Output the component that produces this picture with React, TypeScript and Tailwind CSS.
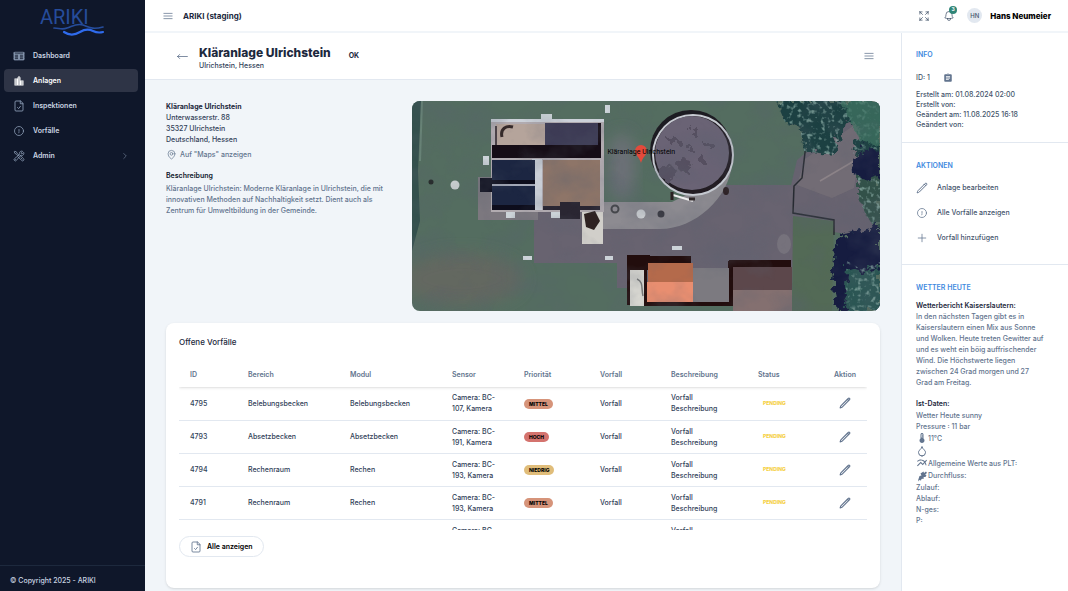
import type { ReactNode } from 'react'
import {
  HiOutlineArrowLongLeft,
  HiOutlineArrowsPointingOut,
  HiOutlineBars3,
  HiOutlineBell,
  HiOutlineChevronRight,
  HiOutlineExclamationCircle,
  HiOutlineMapPin,
  HiOutlinePencil,
  HiOutlinePlus,
  HiOutlineTableCells,
  HiOutlineWrenchScrewdriver,
} from 'react-icons/hi2'
import { MdAssignment, MdLocationCity, MdMultilineChart, MdThermostat } from 'react-icons/md'
import { Droplet } from 'lucide-react'

type Priority = 'MITTEL' | 'HOCH' | 'NIEDRIG'

interface Incident {
  id: number
  area: string
  module: string
  sensor: string
  priority: Priority
}

const incidents: Incident[] = [
  { id: 4795, area: 'Belebungsbecken', module: 'Belebungsbecken', sensor: 'Camera: BC-107, Kamera', priority: 'MITTEL' },
  { id: 4793, area: 'Absetzbecken', module: 'Absetzbecken', sensor: 'Camera: BC-191, Kamera', priority: 'HOCH' },
  { id: 4794, area: 'Rechenraum', module: 'Rechen', sensor: 'Camera: BC-193, Kamera', priority: 'NIEDRIG' },
  { id: 4791, area: 'Rechenraum', module: 'Rechen', sensor: 'Camera: BC-193, Kamera', priority: 'MITTEL' },
  { id: 4790, area: 'Rechenraum', module: 'Rechen', sensor: 'Camera: BC-193, Kamera', priority: 'MITTEL' },
]

const priorityColors: Record<Priority, string> = {
  MITTEL: 'bg-[#d6947a]',
  HOCH: 'bg-[#d4736e]',
  NIEDRIG: 'bg-[#e0bd7a]',
}

const columns = [
  { label: 'ID', width: 'w-[58px]' },
  { label: 'Bereich', width: 'w-[102px]' },
  { label: 'Modul', width: 'w-[102px]' },
  { label: 'Sensor', width: 'w-[72px]' },
  { label: 'Priorität', width: 'w-[76px]' },
  { label: 'Vorfall', width: 'w-[71px]' },
  { label: 'Beschreibung', width: 'w-[87px]' },
  { label: 'Status', width: 'w-[76px]' },
  { label: 'Aktion', width: 'w-[44px]' },
]

function FileCheckIcon({ className }: { className: string }) {
  return (
    <svg className={className} viewBox="0 0 24 24" fill="none" stroke="currentColor" strokeWidth="1.7" strokeLinecap="round" strokeLinejoin="round">
      <path d="M14.5 2H6a2 2 0 0 0-2 2v16a2 2 0 0 0 2 2h12a2 2 0 0 0 2-2V7.500z" />
      <path d="M14.500 2v5.500H20" />
      <path d="m9 15 2.200 2.200L15 12.500" />
    </svg>
  )
}

function Logo() {
  return (
    <svg className="h-[30px] w-[66px] overflow-visible" viewBox="0 0 66 30" fill="none">
      <text x="0" y="17" fill="#264c9a" className="font-['Roboto'] text-[20px]">ARIKI</text>
      <path d="M14 21c5 0 8 2 13 0 6-2 10-5 16-3s9 5 20 2" stroke="#264c9a" strokeWidth="1.700" strokeLinecap="round" />
      <path d="M24 25c6 4 11 3 16 0s9-3 13-1 6 2 10 1" stroke="#2f6bec" strokeWidth="2.200" strokeLinecap="round" />
    </svg>
  )
}

function NavItem({ icon, label, active, more }: { icon: ReactNode; label: string; active?: boolean; more?: boolean }) {
  return (
    <a
      href="#"
      className={`flex h-[23px] items-center rounded px-[9px] text-[7px] leading-[11px] font-semibold ${active ? 'bg-[#2e3446] text-white' : 'text-slate-300'}`}
    >
      <span className="mr-2 text-slate-400">{icon}</span>
      <span className="flex-1">{label}</span>
      {more && <HiOutlineChevronRight className="size-2 text-slate-400" />}
    </a>
  )
}

function Sidebar() {
  return (
    <aside className="sticky top-0 flex h-screen w-[145px] shrink-0 flex-col bg-[#0f172a]">
      <div className="flex h-11 justify-center pt-[7px]">
        <Logo />
      </div>
      <nav className="flex flex-1 flex-col gap-[2px] pr-[7px] pl-1">
        <NavItem icon={<HiOutlineTableCells className="size-3" />} label="Dashboard" />
        <NavItem icon={<MdLocationCity className="size-3 text-white" />} label="Anlagen" active />
        <NavItem icon={<FileCheckIcon className="size-3" />} label="Inspektionen" />
        <NavItem icon={<HiOutlineExclamationCircle className="size-3" />} label="Vorfälle" />
        <NavItem icon={<HiOutlineWrenchScrewdriver className="size-3" />} label="Admin" more />
      </nav>
      <div className="border-t border-slate-800 px-[10px] pt-[9px] pb-[5px] text-[7px] leading-[11px] font-medium text-slate-300">
        © Copyright 2025 - ARIKI
      </div>
    </aside>
  )
}

function Topbar() {
  return (
    <header className="flex h-[33px] items-center border-b-2 border-slate-100 bg-white px-[17px]">
      <button type="button" aria-label="Menü" className="mr-[9px] text-slate-500">
        <HiOutlineBars3 className="size-3" />
      </button>
      <span className="text-[8px] font-bold text-slate-800">ARIKI (staging)</span>
      <div className="ml-auto flex items-center">
        <button type="button" aria-label="Vollbild" className="mr-[13px] text-slate-600">
          <HiOutlineArrowsPointingOut className="size-3" />
        </button>
        <button type="button" aria-label="Benachrichtigungen" className="relative mr-3 text-slate-600">
          <HiOutlineBell className="size-3" />
          <span className="absolute -top-1 left-[6px] flex size-2 items-center justify-center rounded-full bg-[#2f8577] text-[5px] font-bold text-white">3</span>
        </button>
        <span className="mr-2 flex size-[15px] items-center justify-center rounded-full bg-slate-200 text-[6px] font-medium text-slate-600">HN</span>
        <span className="text-[8px] font-extrabold text-black">Hans Neumeier</span>
      </div>
    </header>
  )
}

function PageHeader() {
  return (
    <div className="flex h-[47px] items-center border-b border-slate-200 bg-white pr-[26px] pl-[31px]">
      <a href="#" aria-label="Zurück" className="mr-[10px] text-slate-500">
        <HiOutlineArrowLongLeft className="size-[13px]" />
      </a>
      <div className="pt-[3px]">
        <h1 className="text-[12px] leading-[15px] font-extrabold text-slate-800">Kläranlage Ulrichstein</h1>
        <p className="text-[7px] leading-[11px] font-medium text-slate-700">Ulrichstein, Hessen</p>
      </div>
      <span className="ml-[18px] text-[7px] font-bold text-slate-800">OK</span>
      <button type="button" aria-label="Optionen" className="ml-auto text-slate-500">
        <HiOutlineBars3 className="size-3" />
      </button>
    </div>
  )
}

// Aerial view of the plant, simplified to its roofs, basins and paths
function AerialMap() {
  return (
    <svg className="absolute inset-0 size-full" viewBox="0 0 468 210" preserveAspectRatio="xMidYMid slice">
      <defs>
        <filter id="rough" x="-5%" y="-5%" width="110%" height="110%">
          <feTurbulence type="fractalNoise" baseFrequency="0.15" numOctaves="3" seed="4" result="n" />
          <feDisplacementMap in="SourceGraphic" in2="n" scale="14" />
        </filter>
        <filter id="soft">
          <feGaussianBlur stdDeviation="0.5" />
        </filter>
        <filter id="haze" x="-30%" y="-30%" width="160%" height="160%">
          <feGaussianBlur stdDeviation="8" />
        </filter>
        <filter id="patches" x="0" y="0" width="100%" height="100%">
          <feTurbulence type="fractalNoise" baseFrequency="0.025 0.03" numOctaves="4" seed="8" />
          <feColorMatrix values="0 0 0 0 0.1  0 0 0 0 0.12  0 0 0 0 0.16  1.800 0 0 0 -0.750" />
        </filter>
        <filter id="leaves" x="0" y="0" width="100%" height="100%">
          <feTurbulence type="fractalNoise" baseFrequency="0.22" numOctaves="2" seed="3" />
          <feColorMatrix values="0 0 0 0 0.28  0 0 0 0 0.45  0 0 0 0 0.41  4 0 0 0 -2.100" result="l" />
          <feComposite in="l" in2="SourceAlpha" operator="in" />
        </filter>
      </defs>
      <rect width="468" height="210" fill="#546d60" />
      <path d="M0 0h9L6 70l2 50-8 30z" fill="#34504d" />
      <path d="M10 0l-2 60" stroke="#698577" strokeWidth="2" />
      <ellipse cx="50" cy="178" rx="60" ry="26" fill="#646860" filter="url(#haze)" />
      <ellipse cx="210" cy="66" rx="13" ry="34" fill="#6d7078" filter="url(#haze)" />
      <g filter="url(#soft)">
        <path d="M122 111h69v-9h75l48-18h65l6-25 48-40h17l-7 50 24 70-45-8-39-4 2 60H205v-25h-83z" fill="#67636f" />
        <path d="M66 76h60v43H66z" fill="#7b787f" />
        <path d="M190 101h70l52-26 8-12c-3 34-37 65-72 65h-58z" fill="#8d8b91" />
        <path d="M385 84l8-26 51-35 5 20-7 44-22 10z" fill="#777078" opacity=".7" />
        <path d="M408 80l34-20" stroke="#8c8388" strokeWidth="1.500" />
        <path d="M381 115l41 5-2 90h-40z" fill="#536a57" />
        <path d="M394 43l-4 34-8 8-1 27 41 7v15" fill="none" stroke="#282b31" strokeWidth="1.500" />
        {/* main building */}
        <path d="M79 18h113v93H79z" fill="#b1abb0" />
        <path d="M79 18h113v3H79zM120 58h10v51h-10z" fill="#ccd1d9" />
        <path d="M84 23h50v21H84z" fill="#b5a49b" />
        <path d="M133 22h53v23h-53z" fill="#3d3b55" />
        <path d="M186 22h3v25h-3zM80 44h109v13H80z" fill="#160e18" />
        <path d="M80 59h43v50H80z" fill="#1e2543" />
        <path d="M80 79h43v4H80zM80 104h43v5H80zM68 77h12v14H68z" fill="#10111f" />
        <path d="M80 84h43" stroke="#d2d6df" strokeWidth="1.500" />
        <path d="M131 59h57v50h-57z" fill="#8e7568" />
        <path d="M131 105h57v4h-57zM148 101h20v17h-20z" fill="#292631" />
        <path d="M90 36c-2-8 4-12 11-10" fill="none" stroke="#35292b" strokeWidth="3" />
        <path d="M84 44V25" stroke="#4b4247" strokeWidth="2" />
        <path d="M170 111h21v32h-21z" fill="#d1cfca" />
        <path d="M172 113l11-3 5 10-6 9-8-3z" fill="#2d2320" />
        <path d="M129 13h11v5h-11zM193 4h5v8h-5zM71 55h6v9h-6zM94 111h9v6h-9zM139 111h9v6h-9zM111 155h9v4h-9zM193 155h8v4h-8zM260 145h10v4h-10z" fill="#ccd3d8" />
        <circle cx="43" cy="84" r="4.500" fill="#ccd1d2" />
        <circle cx="19" cy="81" r="2.500" fill="#252b29" />
        <circle cx="229" cy="113" r="4.500" fill="#d8dbdd" />
        <circle cx="249" cy="113" r="3.500" fill="#393940" />
        <circle cx="203" cy="108" r="3.500" fill="none" stroke="#45464b" strokeWidth="2" />
        <ellipse cx="372" cy="143" rx="7" ry="10" fill="#76727c" />
        {/* round basin */}
        <circle cx="279" cy="50" r="41" fill="#1f1b22" />
        <circle cx="281" cy="54" r="41" fill="#c7cbd2" />
        <circle cx="281" cy="54" r="39" fill="#211b23" />
        <circle cx="280" cy="52" r="37" fill="#6a6474" />
        <g filter="url(#rough)" fill="#565060">
          <circle cx="272" cy="64" r="7" />
          <circle cx="256" cy="72" r="8" />
          <path d="M256 38h14v5h-14zM280 26h5v9h-5zM294 42h8v5h-8zM274 44h6v5h-6zM286 56h7v5h-7z" />
        </g>
        <path d="M261 94l20 6" stroke="#eee" strokeWidth="2" />
        <path d="M260 91v8M277 98h6" stroke="#2b2022" strokeWidth="3" />
        <ellipse cx="314" cy="90" rx="3" ry="4" fill="#2d2225" />
        {/* sheds along the drive */}
        <path d="M215 154h23v15h-23zM233 155h46v9h-46zM215 164h4v40h-4zM231 160h4v44h-4zM232 201h86v4h-86zM317 159h62v8h-62zM316 160h5v45h-5z" fill="#20100f" />
        <path d="M218 169h14v36h-14z" fill="#d9d8d2" />
        <path d="M225 178c7 3 4 10 6 17" fill="none" stroke="#777878" strokeWidth="1.500" />
        <path d="M236 162h45v20h-45z" fill="#b46a4b" />
        <path d="M235 181h46v20h-46z" fill="#e88e70" />
        <path d="M281 167h36v34h-36z" fill="#7c7a80" />
        <path d="M321 166h59v23h-59z" fill="#5c464b" />
        <path d="M321 189h59v21h-59z" fill="#846f70" />
      </g>
      <path d="M364 0h104v58l-27-5 6-28-15-5-10 34-30-4-4-24-15-5z" fill="#1f3f42" filter="url(#rough)" />
      <path d="M364 0h104v58l-27-5 6-28-15-5-10 34-30-4-4-24-15-5z" filter="url(#leaves)" opacity=".7" />
      <path d="M430 0h38v45l-22-6z" fill="#3f7563" opacity=".75" filter="url(#rough)" />
      <path d="M446 74l22-8v66l-13-16-9-20z" fill="#315148" filter="url(#rough)" />
      <path d="M446 74l22-8v66l-13-16-9-20z" filter="url(#leaves)" opacity=".7" />
      <path d="M441 58l16-12 11 5v23l-12 5-14-5zM424 135l17-4 27-6v85h-42l-6-30z" fill="#141e40" filter="url(#rough)" />
      <path d="M435 167l14 5 19-7v45h-35z" fill="#2c5753" filter="url(#rough)" />
      <path d="M435 160l14 8 19-7v49h-35z" filter="url(#leaves)" opacity=".7" />
      <rect width="468" height="210" filter="url(#patches)" opacity=".4" />
    </svg>
  )
}

function PlantOverview() {
  return (
    <section className="flex">
      <div className="w-[246px] shrink-0 pr-3 text-[7px] leading-[11px] font-medium text-slate-700">
        <h2 className="font-bold text-slate-800">Kläranlage Ulrichstein</h2>
        <p>Unterwasserstr. 88</p>
        <p>35327 Ulrichstein</p>
        <p>Deutschland, Hessen</p>
        <a href="#" className="mt-[4px] flex items-center gap-[3px] text-slate-500">
          <HiOutlineMapPin className="size-[11px]" />
          Auf "Maps" anzeigen
        </a>
        <h3 className="mt-[10px] font-semibold text-slate-900">Beschreibung</h3>
        <p className="mt-[2px] text-slate-500">
          Kläranlage Ulrichstein: Moderne Kläranlage in Ulrichstein, die mit innovativen Methoden auf Nachhaltigkeit setzt. Dient auch als Zentrum für Umweltbildung in der Gemeinde.
        </p>
      </div>
      <div className="relative h-[210px] flex-1 overflow-hidden rounded-lg">
        <AerialMap />
        <div className="absolute top-[44px] left-[49%] flex w-[100px] -translate-x-1/2 justify-center">
          <svg className="h-[18px] w-[12px]" viewBox="0 0 12 18">
            <path d="M6 0a6 6 0 0 0-6 6c0 4 4.500 6 6 12 1.500-6 6-8 6-12a6 6 0 0 0-6-6z" fill="#e34a3b" />
          </svg>
          <span className="absolute top-[3px] font-['Roboto'] text-[7px] leading-[8px] whitespace-nowrap text-black">Kläranlage Ulrichstein</span>
        </div>
      </div>
    </section>
  )
}

function IncidentTable() {
  return (
    <table className="w-full table-fixed border-collapse text-left text-[7px] leading-[11px]">
      <thead className="shadow-sm">
        <tr className="h-[26px]">
          {columns.map((col) => (
            <th key={col.label} scope="col" className={`${col.width} px-[11px] font-semibold whitespace-nowrap text-slate-500`}>
              {col.label}
            </th>
          ))}
        </tr>
      </thead>
      <tbody className="font-medium text-slate-700">
        {incidents.map((row) => (
          <tr key={row.id} className="h-[33px] border-b border-slate-200">
            <td className="px-[11px]">{row.id}</td>
            <td className="px-[11px]">{row.area}</td>
            <td className="px-[11px]">{row.module}</td>
            <td className="px-[11px]">{row.sensor}</td>
            <td className="px-[11px]">
              <span className={`inline-block rounded-full px-[5px] align-middle text-[5px] leading-[10px] font-extrabold text-black ${priorityColors[row.priority]}`}>
                {row.priority}
              </span>
            </td>
            <td className="px-[11px]">Vorfall</td>
            <td className="px-[11px]">Vorfall Beschreibung</td>
            <td className="px-4 text-[5px] font-extrabold text-[#f5cf45]">PENDING</td>
            <td className="px-4">
              <button type="button" aria-label={`Vorfall ${row.id} bearbeiten`} className="block text-slate-500">
                <HiOutlinePencil strokeWidth={2.2} className="size-3" />
              </button>
            </td>
          </tr>
        ))}
      </tbody>
    </table>
  )
}

function IncidentsCard() {
  return (
    <section className="rounded-lg bg-white px-[13px] pt-[13px] pb-[31px] shadow-sm">
      <h2 className="text-[8px] leading-[12px] font-medium text-slate-800">Offene Vorfälle</h2>
      <div className="mt-[13px] h-[169px] overflow-hidden">
        <IncidentTable />
      </div>
      <button type="button" className="mt-[6px] flex h-[21px] items-center gap-[5px] rounded-full border border-slate-200 px-[10px] text-[7px] leading-[11px] font-semibold text-black">
        <FileCheckIcon className="size-3 text-slate-500" />
        Alle anzeigen
      </button>
    </section>
  )
}

function SectionTitle({ children }: { children: ReactNode }) {
  return <h2 className="text-[7px] leading-[10px] font-semibold text-[#3f8ae0]">{children}</h2>
}

function ActionButton({ icon, label }: { icon: ReactNode; label: string }) {
  return (
    <button type="button" className="flex h-[25px] items-center gap-[9px] font-medium text-slate-600">
      <span className="text-slate-500">{icon}</span>
      {label}
    </button>
  )
}

function InfoPanel() {
  return (
    <aside className="w-[167px] shrink-0 border-l border-slate-200 bg-white text-[7px] leading-[11px] font-medium text-slate-500">
      <section className="border-b border-slate-200 px-[14px] pt-[17px] pb-[12px] text-slate-600">
        <SectionTitle>INFO</SectionTitle>
        <div className="mt-[12px] mb-[7px] flex items-center gap-[13px]">
          ID: 1
          <button type="button" aria-label="ID kopieren" className="text-slate-500">
            <MdAssignment className="size-[10px]" />
          </button>
        </div>
        <div className="leading-[10px]">
          <p>Erstellt am: 01.08.2024 02:00</p>
          <p>Erstellt von:</p>
          <p>Geändert am: 11.08.2025 16:18</p>
          <p>Geändert von:</p>
        </div>
      </section>
      <section className="border-b border-slate-200 px-[14px] pt-[18px] pb-[14px]">
        <SectionTitle>AKTIONEN</SectionTitle>
        <div className="mt-1 flex flex-col items-start">
          <ActionButton icon={<HiOutlinePencil strokeWidth={2} className="size-3" />} label="Anlage bearbeiten" />
          <ActionButton icon={<HiOutlineExclamationCircle className="size-3" />} label="Alle Vorfälle anzeigen" />
          <ActionButton icon={<HiOutlinePlus className="size-3" />} label="Vorfall hinzufügen" />
        </div>
      </section>
      <section className="pt-[18px] pr-[22px] pb-[17px] pl-[14px]">
        <SectionTitle>WETTER HEUTE</SectionTitle>
        <h3 className="mt-[7px] font-semibold whitespace-nowrap text-slate-800">Wetterbericht Kaiserslautern:</h3>
        <p>
          In den nächsten Tagen gibt es in Kaiserslautern einen Mix aus Sonne und Wolken. Heute treten Gewitter auf und es weht ein böig auffrischender Wind. Die Höchstwerte liegen zwischen 24 Grad morgen und 27 Grad am Freitag.
        </p>
        <h3 className="mt-[10px] mb-px font-semibold text-slate-800">Ist-Daten:</h3>
        <p>Wetter Heute sunny</p>
        <p>Pressure : 11 bar</p>
        <p className="flex h-[12px] items-center"><MdThermostat className="size-3" />11°C</p>
        <p className="flex h-[13px] items-center"><Droplet className="size-3" /></p>
        <p className="flex h-[12px] items-center"><MdMultilineChart className="size-3" />Allgemeine Werte aus PLT:</p>
        <p className="flex h-[13px] items-center">
          <svg className="size-3" viewBox="0 0 24 24" fill="currentColor">
            <path d="M4 21l3-9 4-1-2-4 6-4 1 3 4-3 2 3-4 3 3 1-2 4-4 0 1 3-5 1-1 3-4-1-2 3z" />
          </svg>
          Durchfluss:
        </p>
        <p>Zulauf:</p>
        <p>Ablauf:</p>
        <p>N-ges:</p>
        <p>P:</p>
      </section>
    </aside>
  )
}

export default function App() {
  return (
    <div className="flex min-h-screen bg-white font-['Inter',sans-serif]">
      <Sidebar />
      <div className="flex min-w-0 flex-1 flex-col">
        <Topbar />
        <div className="flex flex-1">
          <main className="flex min-w-0 flex-1 flex-col bg-slate-100">
            <PageHeader />
            <div className="flex flex-col gap-3 px-[21px] pt-[21px] pb-[3px]">
              <PlantOverview />
              <IncidentsCard />
            </div>
          </main>
          <InfoPanel />
        </div>
      </div>
    </div>
  )
}
